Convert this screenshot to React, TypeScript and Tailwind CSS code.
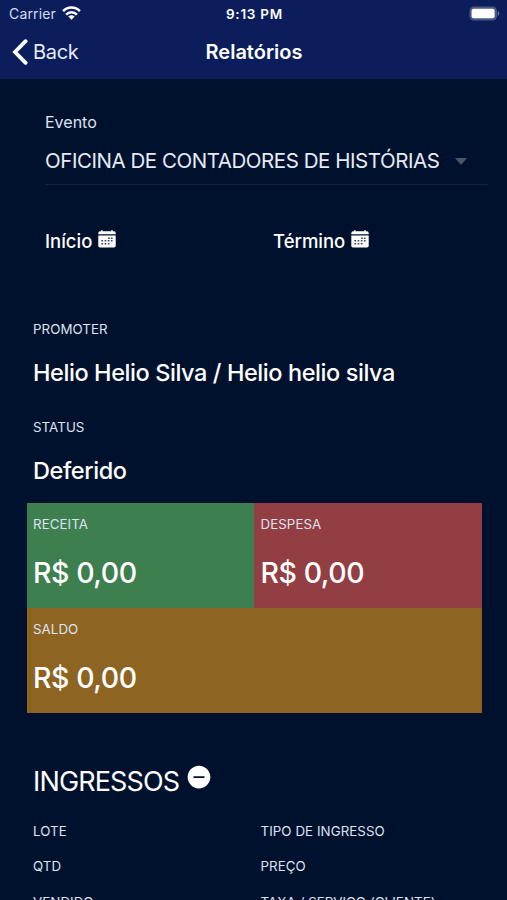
import { ReactNode } from 'react'
import { IoIosRemoveCircle } from 'react-icons/io'

interface Column {
  left: string
  right: string
}

const ticketColumns: Column[] = [
  { left: 'LOTE', right: 'TIPO DE INGRESSO' },
  { left: 'QTD', right: 'PREÇO' },
  { left: 'VENDIDO', right: 'TAXA / SERVIÇO (CLIENTE)' },
]

function Label({ children }: { children: ReactNode }) {
  return (
    <div className="h-4 whitespace-nowrap text-[13.3px] leading-4 tracking-[0.07px] text-[#dde3f0]">{children}</div>
  )
}

function CalendarIcon() {
  return (
    <svg width="18" height="18" viewBox="0 0 18 18" className="-mt-[7px] shrink-0 fill-white">
      <path d="M0.3 4.2V3Q0.3 1.3 2 1.3H3V0.2H4.6V1.3H13.2V0.2H14.8V1.3H16Q17.7 1.3 17.7 3V4.2Z" />
      <path d="M0.3 5.5H17.7V15.8Q17.7 17.6 16 17.6H2Q0.3 17.6 0.3 15.8Z" />
      {/* day grid */}
      <g className="fill-[#3d4964]">
        <path d="M10 7.4h1.7v1.5H10zM12.9 7.4h1.7v1.5h-1.7z" />
        <path d="M3.4 10.1h1.7v1.5H3.4zM6.6 10.1h1.7v1.5H6.6zM9.8 10.1h1.7v1.5H9.8zM12.9 10.1h1.7v1.5h-1.7z" />
        <path d="M3.4 13.1h1.7v1.5H3.4zM6.6 13.1h1.7v1.5H6.6zM9.8 13.1h1.7v1.5H9.8z" />
      </g>
    </svg>
  )
}

function StatusBar() {
  return (
    <div className="flex h-7 items-center justify-between pl-[9px] pr-[7px] text-[14px] leading-none">
      <div className="flex w-[110px] items-center gap-[6px]">
        <span className="tracking-[0.15px] text-[#d5dcf2]">Carrier</span>
        <svg width="19" height="14" viewBox="0 0 19 14" fill="none" stroke="#fff" strokeWidth="2.5" className="-mt-[2px]">
          <path d="M1.1 5.1C5.7 0.3 13.3 0.3 17.9 5.1" />
          <path d="M4.1 8.6C7.2 5.5 11.8 5.5 14.9 8.6" />
          <path d="M9.5 13.8L6.3 10.6C8.1 8.9 10.9 8.9 12.7 10.6Z" fill="#fff" stroke="none" />
        </svg>
      </div>
      <span className="mt-px whitespace-nowrap text-[13.5px] font-semibold tracking-[0.75px]">9:13 PM</span>
      <div className="flex w-[110px] justify-end">
        <svg width="31" height="15" viewBox="0 0 31 15" className="-mt-[2px]">
          <rect x="0.5" y="0.5" width="27.5" height="14" rx="4.4" fill="#4a5887" />
          <rect x="2.6" y="2.8" width="23" height="9.4" rx="2" fill="#fff" />
          <path d="M28.8 5V10C30.8 9.2 30.8 5.8 28.8 5Z" fill="#69769f" />
        </svg>
      </div>
    </div>
  )
}

function Header() {
  return (
    <header className="h-[79px] bg-[#0b1e5b] text-white">
      <StatusBar />
      <div className="grid h-12 grid-cols-3 items-center pl-3 pr-3">
        <div className="flex items-center gap-[5px] text-[20px] text-[#e6ebfa]">
          <svg width="16" height="26" viewBox="0 0 16 26" fill="none" stroke="#fff" strokeWidth="3.8">
            <path d="M13.6 2.2L3 13L13.6 23.8" strokeLinecap="round" />
          </svg>
          <span className="tracking-[-0.3px]">Back</span>
        </div>
        <h1 className="pl-px text-center text-[20px] font-semibold">Relatórios</h1>
      </div>
    </header>
  )
}

function DateField({ label }: { label: string }) {
  return (
    <div className="flex h-6 items-center gap-[6px] text-[18.5px] font-medium">
      <span>{label}</span>
      <CalendarIcon />
    </div>
  )
}

function EventFilter() {
  return (
    <section className="pl-[45px] pr-[19px] pt-[31px]">
      <div className="h-6 text-[16px] leading-6 text-[#dde3f0]">Evento</div>
      <div className="mt-[15px] flex h-6 items-center justify-between pr-[21px]">
        <span className="whitespace-nowrap text-[20.5px] tracking-[-0.45px] text-[#e6ebf5]">
          OFICINA DE CONTADORES DE HISTÓRIAS
        </span>
        <svg width="12" height="7" viewBox="0 0 12 7" className="fill-[#495469]">
          <path d="M0 0H12L6 7Z" />
        </svg>
      </div>
      <div className="mt-[11px] h-px bg-[#16233f]" />
      <div className="mt-[45px] grid grid-cols-[228px_1fr]">
        <DateField label="Início" />
        <DateField label="Término" />
      </div>
    </section>
  )
}

function Balance({ label, value, className }: { label: string; value: string; className: string }) {
  return (
    <div className={`h-[105px] pl-[6.5px] pt-[13px] ${className}`}>
      <Label>{label}</Label>
      <div className="mt-[21px] h-10 whitespace-nowrap text-[28.5px] font-medium leading-10 tracking-[-0.45px]">
        {value}
      </div>
    </div>
  )
}

export default function App() {
  return (
    <div className="h-[900px] w-full overflow-hidden bg-[#00112e] font-['Inter',sans-serif] text-white">
      <Header />
      <EventFilter />

      <section className="pl-[33px] pt-[67px]">
        <Label>PROMOTER</Label>
        <div className="mt-5 h-8 whitespace-nowrap text-[23.5px] font-medium leading-8 tracking-[-0.42px]">
          Helio Helio Silva / Helio helio silva
        </div>
        <div className="mt-[30px]">
          <Label>STATUS</Label>
        </div>
        <div className="mt-5 h-8 text-[23.5px] font-medium leading-8 tracking-[-0.42px]">Deferido</div>
      </section>

      <section className="ml-[26.5px] mt-[15.5px] grid w-[455px] grid-cols-2">
        <Balance label="RECEITA" value="R$ 0,00" className="bg-[#3d7f4e]" />
        <Balance label="DESPESA" value="R$ 0,00" className="bg-[#933e42]" />
        <Balance label="SALDO" value="R$ 0,00" className="col-span-2 bg-[#8e6423]" />
      </section>

      <section className="pl-[33px] pt-[54px]">
        <div className="flex h-8 items-center gap-[6px] text-[27px] tracking-[-0.85px]">
          <span>INGRESSOS</span>
          <IoIosRemoveCircle className="-mt-[11px] size-7" />
        </div>
        <div className="mt-[24px] flex flex-col gap-[19.5px]">
          {ticketColumns.map((column) => (
            <div key={column.left} className="grid grid-cols-[227.5px_1fr]">
              <Label>{column.left}</Label>
              <Label>{column.right}</Label>
            </div>
          ))}
        </div>
      </section>
    </div>
  )
}
